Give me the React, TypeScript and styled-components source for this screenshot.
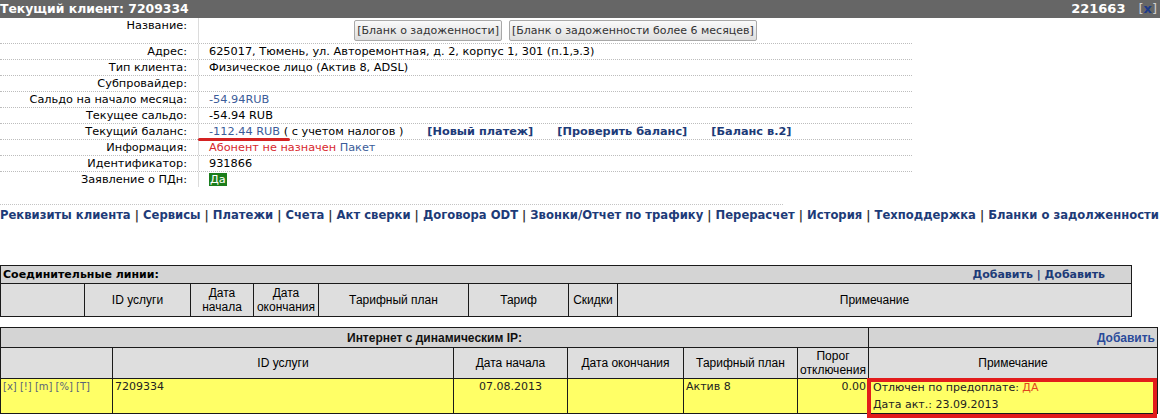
import React from "react";
import styled, { createGlobalStyle } from "styled-components";

const GlobalStyle = createGlobalStyle`
  html, body { margin: 0; padding: 0; background: #fff; }
  body {
    font-family: Verdana, "DejaVu Sans", sans-serif;
    font-size: 11px;
    color: #000;
  }
`;

const Page = styled.div`
  width: 1160px;
  height: 418px;
  overflow: hidden;
`;

const TitleBar = styled.div`
  display: flex;
  align-items: center;
  justify-content: space-between;
  height: 18px;
  line-height: 18px;
  background: #666666;
  color: #fff;
  font-weight: bold;
  font-size: 13px;
  padding-right: 3px;
`;

const TitleText = styled.span`
  font-size: 12.4px;
`;

const TitleRight = styled.div`
  display: flex;
  align-items: center;
  gap: 13px;
`;

const Close = styled.span`
  color: #cfcfcf;
  font-weight: normal;
  & > b {
    color: #1c3a8a;
    font-weight: bold;
  }
`;

const Form = styled.div`
  width: 912px;
  font-size: 11.3px;
`;

const Row = styled.div<{ $tall?: boolean; $last?: boolean }>`
  display: grid;
  grid-template-columns: 198px 1fr;
  height: ${(p) => (p.$tall ? 25 : 15)}px;
  border-bottom: ${(p) => (p.$last ? "1px solid transparent" : "1px dotted #bdbdbd")};
`;

const Label = styled.div`
  text-align: right;
  padding-right: 11px;
  line-height: 15px;
  white-space: nowrap;
`;

const Value = styled.div<{ $center?: boolean }>`
  border-left: 1px solid #dcdcdc;
  padding-left: ${(p) => (p.$center ? 0 : 10)}px;
  line-height: 15px;
  white-space: nowrap;
  display: ${(p) => (p.$center ? "flex" : "block")};
  justify-content: center;
  gap: 7px;
  padding-top: ${(p) => (p.$center ? 2 : 0)}px;
`;

const FormButton = styled.button`
  height: 21px;
  padding: 0 2px;
  font-family: Verdana, "DejaVu Sans", sans-serif;
  font-size: 11px;
  color: #333;
  border: 1px solid #a8a8a8;
  border-radius: 2px;
  background: linear-gradient(#fafafa, #dedede);
  cursor: pointer;
`;

const Blue = styled.span`
  color: #3b5c99;
`;

const Red = styled.span`
  color: #d8282e;
`;

const Marked = styled.span`
  position: relative;
  & > em {
    font-style: normal;
    color: #3b5c99;
  }
  &::after {
    content: "";
    position: absolute;
    left: -11px;
    right: -2px;
    bottom: -3px;
    height: 3px;
    border-radius: 2px;
    background: #d42222;
  }
`;

const ActionLink = styled.a`
  margin-left: 24px;
  color: #1d3b78;
  font-weight: bold;
  text-decoration: none;
`;

const GreenBadge = styled.span`
  background: #1b7d1b;
  color: #fff;
  padding: 0 1px;
`;

const Nav = styled.div`
  margin-top: 16px;
  width: 783px;
  border-top: 1px dotted #c4c4c4;
  padding-top: 2px;
  line-height: 16px;
  white-space: nowrap;
  font-weight: bold;
  font-size: 11.6px;
`;

const NavLink = styled.a`
  color: #1d3b78;
  text-decoration: none;
`;

const Sep = styled.span`
  color: #333;
`;

const Grid = styled.table<{ $w: number; $top: number }>`
  width: ${(p) => p.$w}px;
  margin-top: ${(p) => p.$top}px;
  border-collapse: collapse;
  table-layout: fixed;
  border: 1px solid #000;
  font-family: Arial, "Liberation Sans", sans-serif;
  font-size: 12px;
`;

const HeadRow = styled.tr<{ $h: number }>`
  height: ${(p) => p.$h}px;
  background: #d4d4d4;
`;

const ColRow = styled.tr<{ $h: number }>`
  height: ${(p) => p.$h}px;
  background: #dedede;
`;

const DataRow = styled.tr<{ $h: number }>`
  height: ${(p) => p.$h}px;
  background: #ffff66;
`;

const Cell = styled.td<{ $align?: "left" | "center" | "right"; $top?: boolean }>`
  border: 1px solid #1a1a1a;
  padding: 0 2px;
  text-align: ${(p) => p.$align || "center"};
  vertical-align: ${(p) => (p.$top ? "top" : "middle")};
  line-height: 14px;
  overflow: hidden;
`;

const SectionTitle = styled.span`
  font-family: Verdana, "DejaVu Sans", sans-serif;
  font-size: 11px;
  font-weight: bold;
`;

const SectionHead = styled.div`
  display: flex;
  justify-content: space-between;
  align-items: center;
  padding-right: 24px;
`;

const AddLinks = styled.span`
  font-family: Verdana, "DejaVu Sans", sans-serif;
  font-size: 11px;
  font-weight: bold;
  color: #1d3b78;
`;

const BoldTitle = styled.span`
  font-weight: bold;
  color: #111;
`;

const AddLink = styled.a`
  font-weight: bold;
  color: #2a4a9a;
  text-decoration: none;
`;

const DataText = styled.div`
  font-family: Verdana, "DejaVu Sans", sans-serif;
  font-size: 11px;
  line-height: 15px;
  color: #222;
`;

const Tools = styled.div`
  font-family: Verdana, "DejaVu Sans", sans-serif;
  font-size: 10px;
  line-height: 15px;
  color: #5a6478;
  white-space: nowrap;
`;

const NoteCell = styled.td`
  position: relative;
  border: 1px solid #1a1a1a;
  padding: 0 4px;
  vertical-align: top;
  text-align: left;
  font-family: Verdana, "DejaVu Sans", sans-serif;
  font-size: 11px;
  line-height: 17px;
  color: #222;
  &::after {
    content: "";
    position: absolute;
    top: -1px;
    left: -2px;
    right: 0px;
    bottom: -5px;
    border: 4px solid #e21c1c;
  }
`;

const Orange = styled.span`
  color: #e0461e;
`;

const navItems = [
  "Реквизиты клиента",
  "Сервисы",
  "Платежи",
  "Счета",
  "Акт сверки",
  "Договора ODT",
  "Звонки/Отчет по трафику",
  "Перерасчет",
  "История",
  "Техподдержка",
  "Бланки о задолженности",
];

export default function App() {
  return (
    <Page>
      <GlobalStyle />
      <TitleBar>
        <TitleText>Текущий клиент: 7209334</TitleText>
        <TitleRight>
          <span>221663</span>
          <Close>
            [<b>x</b>]
          </Close>
        </TitleRight>
      </TitleBar>

      <Form>
        <Row $tall>
          <Label>Название:</Label>
          <Value $center>
            <FormButton>[Бланк о задоженности]</FormButton>
            <FormButton>[Бланк о задоженности более 6 месяцев]</FormButton>
          </Value>
        </Row>
        <Row>
          <Label>Адрес:</Label>
          <Value>625017, Тюмень, ул. Авторемонтная, д. 2, корпус 1, 301 (п.1,э.3)</Value>
        </Row>
        <Row>
          <Label>Тип клиента:</Label>
          <Value>Физическое лицо (Актив 8, ADSL)</Value>
        </Row>
        <Row>
          <Label>Субпровайдер:</Label>
          <Value />
        </Row>
        <Row>
          <Label>Сальдо на начало месяца:</Label>
          <Value>
            <Blue>-54.94RUB</Blue>
          </Value>
        </Row>
        <Row>
          <Label>Текущее сальдо:</Label>
          <Value>-54.94 RUB</Value>
        </Row>
        <Row>
          <Label>Текущий баланс:</Label>
          <Value>
            <Marked>
              <em>-112.44 RUB</em> (
            </Marked>{" "}
            с учетом налогов )
            <ActionLink>[Новый платеж]</ActionLink>
            <ActionLink>[Проверить баланс]</ActionLink>
            <ActionLink>[Баланс в.2]</ActionLink>
          </Value>
        </Row>
        <Row>
          <Label>Информация:</Label>
          <Value>
            <Red>Абонент не назначен</Red> <Blue>Пакет</Blue>
          </Value>
        </Row>
        <Row>
          <Label>Идентификатор:</Label>
          <Value>931866</Value>
        </Row>
        <Row $last>
          <Label>Заявление о ПДн:</Label>
          <Value>
            <GreenBadge>Да</GreenBadge>
          </Value>
        </Row>
      </Form>

      <Nav>
        {navItems.map((item, i) => (
          <React.Fragment key={item}>
            {i > 0 && <Sep> | </Sep>}
            <NavLink>{item}</NavLink>
          </React.Fragment>
        ))}
      </Nav>

      <Grid $w={1132} $top={42}>
        <colgroup>
          <col style={{ width: 84 }} />
          <col style={{ width: 106 }} />
          <col style={{ width: 63 }} />
          <col style={{ width: 65 }} />
          <col style={{ width: 150 }} />
          <col style={{ width: 100 }} />
          <col style={{ width: 49 }} />
          <col />
        </colgroup>
        <tbody>
          <HeadRow $h={18}>
            <Cell colSpan={8} $align="left">
              <SectionHead>
                <SectionTitle>Соединительные линии:</SectionTitle>
                <AddLinks>Добавить | Добавить</AddLinks>
              </SectionHead>
            </Cell>
          </HeadRow>
          <ColRow $h={33}>
            <Cell />
            <Cell>ID услуги</Cell>
            <Cell>Дата начала</Cell>
            <Cell>Дата окончания</Cell>
            <Cell>Тарифный план</Cell>
            <Cell>Тариф</Cell>
            <Cell>Скидки</Cell>
            <Cell>Примечание</Cell>
          </ColRow>
        </tbody>
      </Grid>

      <Grid $w={1158} $top={10}>
        <colgroup>
          <col style={{ width: 112 }} />
          <col style={{ width: 341 }} />
          <col style={{ width: 114 }} />
          <col style={{ width: 116 }} />
          <col style={{ width: 114 }} />
          <col style={{ width: 71 }} />
          <col />
        </colgroup>
        <tbody>
          <HeadRow $h={20}>
            <Cell colSpan={6}>
              <BoldTitle>Интернет с динамическим IP:</BoldTitle>
            </Cell>
            <Cell $align="right">
              <AddLink>Добавить</AddLink>
            </Cell>
          </HeadRow>
          <ColRow $h={31}>
            <Cell />
            <Cell>ID услуги</Cell>
            <Cell>Дата начала</Cell>
            <Cell>Дата окончания</Cell>
            <Cell>Тарифный план</Cell>
            <Cell>Порог отключения</Cell>
            <Cell>Примечание</Cell>
          </ColRow>
          <DataRow $h={34}>
            <Cell $align="left" $top>
              <Tools>[x] [!] [m] [%] [T]</Tools>
            </Cell>
            <Cell $align="left" $top>
              <DataText>7209334</DataText>
            </Cell>
            <Cell $top>
              <DataText>07.08.2013</DataText>
            </Cell>
            <Cell $top />
            <Cell $align="left" $top>
              <DataText>Актив 8</DataText>
            </Cell>
            <Cell $align="right" $top>
              <DataText>0.00</DataText>
            </Cell>
            <NoteCell>
              <div>
                Отлючен по предоплате: <Orange>ДА</Orange>
              </div>
              <div>Дата акт.: 23.09.2013</div>
            </NoteCell>
          </DataRow>
        </tbody>
      </Grid>
    </Page>
  );
}
